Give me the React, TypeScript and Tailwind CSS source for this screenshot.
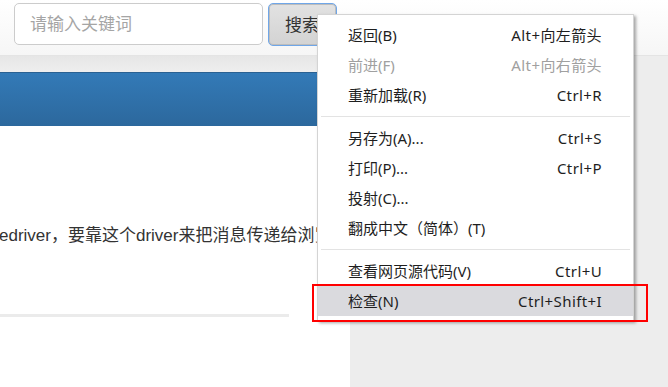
import React from "react";

type Item = { label: string; shortcut?: string; disabled?: boolean; active?: boolean };

const groups: Item[][] = [
  [
    { label: "返回(B)", shortcut: "Alt+向左箭头" },
    { label: "前进(F)", shortcut: "Alt+向右箭头", disabled: true },
    { label: "重新加载(R)", shortcut: "Ctrl+R" },
  ],
  [
    { label: "另存为(A)...", shortcut: "Ctrl+S" },
    { label: "打印(P)...", shortcut: "Ctrl+P" },
    { label: "投射(C)..." },
    { label: "翻成中文（简体）(T)" },
  ],
  [
    { label: "查看网页源代码(V)", shortcut: "Ctrl+U" },
    { label: "检查(N)", shortcut: "Ctrl+Shift+I", active: true },
  ],
];

export default function App() {
  return (
    <div
      className="relative w-[668px] h-[387px] overflow-hidden bg-[#ededed]"
      style={{ fontFamily: '"Liberation Sans", "Noto Sans CJK SC", sans-serif' }}
    >
      {/* navbar */}
      <div className="h-[56px] bg-gradient-to-b from-[#ffffff] to-[#f6f6f6] border-b border-[#e4e4e4] flex items-start pt-[3px] pl-[14px] gap-[5px]">
        <div className="w-[249px] h-[42px] rounded-[5px] border border-[#cccccc] bg-white flex items-center pl-[15px] pt-[2px] text-[17px] text-[#a5a5a5]">
          请输入关键词
        </div>
        <div className="w-[69px] h-[43px] rounded-[5px] border border-[#6fa6e8] bg-gradient-to-b from-[#e2e2e2] to-[#d3d3d3] shadow-[inset_0_0_0_1px_#bdbdbd] flex items-center pl-[16px] pt-[2px] text-[17px] text-[#333]">
          搜索
        </div>
      </div>

      {/* main column */}
      <div className="w-[350px] flex flex-col">
        <div className="h-[16px] bg-gradient-to-b from-[#e6e6e6] to-[#eeeeee]" />
        <div className="h-[54px] border-t border-[#2a6192] bg-gradient-to-b from-[#337ab7] to-[#2c689d]" />
        <div className="h-[261px] bg-white flex flex-col">
          <div className="mt-[98px] ml-[-1px] whitespace-nowrap text-[17px] leading-[24px] text-[#333]">
            edriver，要靠这个driver来把消息传递给浏览器
          </div>
          <div className="mt-[66px] w-[289px] h-[3px] bg-[#ebebeb]" />
        </div>
      </div>

      {/* context menu */}
      <div
        className="absolute left-[317px] top-[14px] w-[317px] bg-white border border-[#d4d4d4] shadow-[2px_2px_3px_rgba(0,0,0,0.35)] pt-[5px] pb-[4px]"
        style={{ fontFamily: '"Noto Sans", "Noto Sans CJK SC", sans-serif' }}
      >
        {groups.map((g, gi) => (
          <div key={gi}>
            {gi > 0 && <div className="mx-[3px] my-[6px] h-px bg-[#e3e3e3]" />}
            {g.map((it, i) => (
              <div
                key={i}
                className={
                  "h-[30px] flex items-center justify-between pl-[30px] pr-[31px] text-[15px] " +
                  (it.disabled ? "text-[#a0a0a0] " : "text-[#1e1e1e] ") +
                  (it.active ? "bg-[#dadade]" : "")
                }
              >
                <span>{it.label}</span>
                {it.shortcut && <span className="tracking-[0.4px]">{it.shortcut}</span>}
              </div>
            ))}
          </div>
        ))}
      </div>

      {/* red highlight box */}
      <div className="absolute left-[312px] top-[284px] w-[336px] h-[38px] border-2 border-[#ff0000]" />
    </div>
  );
}
